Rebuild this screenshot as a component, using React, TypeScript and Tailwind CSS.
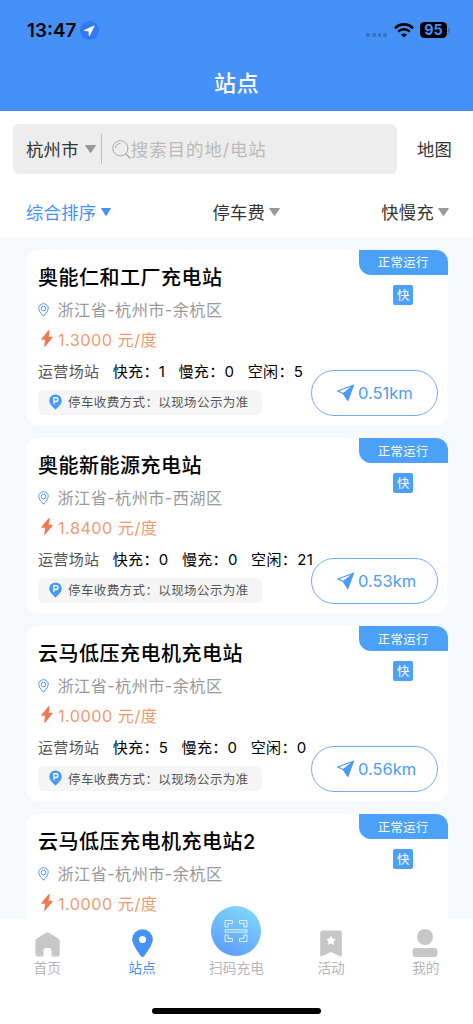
import type { ReactNode } from "react";

const stations = [
    { name: "奥能仁和工厂充电站", address: "浙江省-杭州市-余杭区", price: "1.3000", fast: 1, slow: 0, idle: 5, distance: "0.51km" },
    { name: "奥能新能源充电站", address: "浙江省-杭州市-西湖区", price: "1.8400", fast: 0, slow: 0, idle: 21, distance: "0.53km" },
    { name: "云马低压充电机充电站", address: "浙江省-杭州市-余杭区", price: "1.0000", fast: 5, slow: 0, idle: 0, distance: "0.56km" },
    { name: "云马低压充电机充电站2", address: "浙江省-杭州市-余杭区", price: "1.0000" },
];

type Station = {
    name: string;
    address: string;
    price: string;
    fast?: number;
    slow?: number;
    idle?: number;
    distance?: string;
};

function Caret({ className }: { className: string }) {
    return (
        <svg className={className} viewBox="0 0 10 8" preserveAspectRatio="none" fill="currentColor">
            <path d="M.6 0h8.8q.8 0 .4.7L5.5 7.6q-.5.7-1 0L.2.7Q-.2 0 .6 0Z" />
        </svg>
    );
}

function StatusBar() {
    return (
        <div className="flex h-[60px] items-center pl-[27px] pr-[23px]">
            <span className="pt-[2px] font-['Inter'] text-[18.8px] font-semibold leading-none text-black">13:47</span>
            <svg className="ml-[4px] size-[19px]" viewBox="0 0 19 19">
                <circle cx="9.5" cy="9.5" r="9.5" fill="#3478f6" />
                <path d="M14 4.6 4 9.3q-.6.5.2.7l4.4.2.2 4.6q.3.8.8.1L14.5 5.2q.1-.7-.5-.6Z" fill="#fff" />
            </svg>
            <div className="ml-auto flex items-center">
                <div className="mt-[10px] flex gap-[2px]">
                    {[0, 1, 2, 3].map((i) => (
                        <span key={i} className="size-[3.7px] rounded-[1px] bg-[#3473c5]" />
                    ))}
                </div>
                <svg className="ml-[7px] h-[15px] w-[20px]" viewBox="0 0 20 15" fill="none" stroke="#000">
                    <path d="M1 5.2Q5 1.4 10 1.4T19 5.2" strokeWidth="2.6" />
                    <path d="M4.2 8.7Q6.8 6.3 10 6.3T15.8 8.7" strokeWidth="2.5" />
                    <path d="M10 14.5 6.9 11.6Q8.2 10.4 10 10.4T13.1 11.6Z" fill="#000" stroke="none" />
                </svg>
                <div className="ml-[6px] flex h-[16px] w-[27px] items-center justify-center rounded-[4.5px] bg-black pt-px font-['Inter'] text-[14.3px] font-bold leading-none text-[#4591f8]">
                    95
                </div>
                <span className="ml-[1px] h-[5px] w-[2px] rounded-r bg-[#3473c5]" />
            </div>
        </div>
    );
}

function StationCard({ station }: { station: Station }) {
    return (
        <div className="relative h-[175.5px] w-[422px] shrink-0 rounded-[12px] bg-white pl-[12.5px]">
            <div className="absolute right-0 top-0 flex w-[88.5px] flex-col items-center">
                <div className="flex h-[25px] w-full items-center justify-center rounded-bl-[12px] rounded-tr-[12px] bg-[#4ba0f8] pt-[3px] text-[12.3px] tracking-[0.4px] text-white">
                    正常运行
                </div>
                <div className="mt-[10.5px] flex size-[20px] items-center justify-center rounded-[2px] bg-[#4ba0f8] pt-[2px] text-[12.5px] leading-none text-white">
                    快
                </div>
            </div>

            <div className="flex h-[45px] items-center pt-[12px] text-[20px] font-medium tracking-[0.5px] text-black">
                {station.name}
            </div>
            <div className="flex h-[30px] items-center text-[16.2px] tracking-[0.4px] text-[#999]">
                <svg className="mr-[8.5px] h-[14px] w-[11px]" viewBox="0 0 11 14" fill="none" stroke="#4b96f8">
                    <path d="M5.5 13.2Q.7 8.5.7 5.5a4.8 4.8 0 0 1 9.6 0Q10.3 8.5 5.5 13.2Z" />
                    <circle cx="5.5" cy="5.5" r="2.3" />
                </svg>
                {station.address}
            </div>
            <div className="flex h-[30px] items-center text-[16.2px] tracking-[0.5px] text-[#f09972]">
                <svg className="mb-[2px] ml-[3px] mr-[5px] h-[17px] w-[12px]" viewBox="0 0 12 17" fill="#ee7850">
                    <path d="M7.6.3.2 8.9q-.4.8.5.8h3.5L3.2 16q.1 1.2 1 .4L11.7 7.6q.5-.8-.4-.8H7.7L8.6.8Q8.5-.5 7.6.3Z" />
                </svg>
                {station.price} 元/度
            </div>

            {station.distance && (
                <>
                    <div className="flex h-[33px] items-center gap-[13.3px] whitespace-nowrap pt-[2px] text-[15px] tracking-[0.35px] text-black">
                        <span className="text-[#555]">运营场站</span>
                        <span>快充：{station.fast}</span>
                        <span>慢充：{station.slow}</span>
                        <span>空闲：{station.idle}</span>
                    </div>
                    <div className="mt-[2px] flex h-[25px] w-[224px] items-center rounded-[6px] bg-[#f5f5f5] pl-[10.5px] text-[12.5px] tracking-[0.4px] text-[#555]">
                        <svg className="mr-[6.5px] h-[16px] w-[13px] shrink-0" viewBox="0 0 13 16">
                            <path d="M6.5 15.8 2.2 11.3A6.3 6.3 0 1 1 10.8 11.3Z" fill="#469af0" />
                            <path d="M4.9 10V3.7h2.2a1.9 1.9 0 0 1 0 3.8H4.9" fill="none" stroke="#fff" strokeWidth="1.3" />
                        </svg>
                        <span className="pt-[3px]">停车收费方式：以现场公示为准</span>
                    </div>

                    <button className="absolute bottom-[9.5px] right-[10px] flex h-[46px] w-[126.5px] items-center rounded-full border border-[#6eaafb] pl-[24px] text-[16.5px] text-[#4b9bf8]">
                        <svg className="mr-[3px] h-[18px] w-[19px]" viewBox="0 0 19 18">
                            <path d="M18.5.3.3 6.9l6.3 2.9L12 17.8Z" fill="#4b9bf8" />
                            <path d="M15 2.8 3.3 6.9l4 1.8Z" fill="#fff" />
                        </svg>
                        <span className="pt-px">{station.distance}</span>
                    </button>
                </>
            )}
        </div>
    );
}

function NavItem({ label, active, children }: { label: string; active?: boolean; children: ReactNode }) {
    return (
        <div className={`flex flex-1 flex-col items-center text-[13.7px] leading-[20px] ${active ? "text-[#4591f8]" : "text-[#b5b5b5]"}`}>
            <div className="flex h-[39px] items-end pb-[1px]">{children}</div>
            {label}
        </div>
    );
}

export default function App() {
    return (
        <div className="flex h-[1024px] w-[473px] flex-col overflow-hidden bg-[#f5f9fc] font-['Inter','Noto_Sans_CJK_SC',sans-serif]">
            <header className="h-[111px] shrink-0 bg-[#4591f8]">
                <StatusBar />
                <h1 className="mt-[6px] text-center text-[22px] font-medium leading-[34px] tracking-[0.5px] text-white">站点</h1>
            </header>

            {/* Search */}
            <div className="flex h-[76px] shrink-0 items-center bg-white pl-[13px] text-[17.3px] tracking-[0.3px] text-[#333]">
                <div className="flex h-[50px] w-[384px] items-center rounded-[6px] bg-[#ededed] pl-[13px]">
                    <span className="pt-[2px]">杭州市</span>
                    <Caret className="ml-[6px] h-[8px] w-[11px] text-[#999]" />
                    <span className="ml-[5px] h-[30px] w-px bg-[#bbb]" />
                    <svg className="ml-[10px] size-[19px]" viewBox="0 0 19 19" fill="none" stroke="#aaa">
                        <circle cx="8.3" cy="8.3" r="7.6" />
                        <path d="m13.8 13.8 4.7 4.7" strokeWidth="1.4" />
                        <path d="M3.5 8.3a4.8 4.8 0 0 1 4.8-4.8" />
                    </svg>
                    <span className="pt-[2px] text-[17.5px] tracking-[0.9px] text-[#bababa]">搜索目的地/电站</span>
                </div>
                <span className="ml-[20px] pt-[2px]">地图</span>
            </div>

            {/* Filters */}
            <div className="flex h-[50px] shrink-0 items-center justify-between bg-white pl-[26px] pr-[24px] pt-[2px] text-[17.3px] tracking-[0.3px] text-[#333]">
                <div className="flex items-center text-[#4591f8]">
                    综合排序
                    <Caret className="mb-[2px] ml-[5px] h-[8px] w-[10px]" />
                </div>
                <div className="flex items-center">
                    停车费
                    <Caret className="mb-[2px] ml-[4px] h-[8px] w-[11px] text-[#999]" />
                </div>
                <div className="flex items-center">
                    快慢充
                    <Caret className="mb-[2px] ml-[4px] h-[8px] w-[11px] text-[#999]" />
                </div>
            </div>

            {/* Station list */}
            <main className="flex h-[682px] shrink-0 flex-col gap-[12.6px] overflow-hidden pl-[25.5px] pt-[12.7px]">
                {stations.map((station) => (
                    <StationCard key={station.name} station={station} />
                ))}
            </main>

            <nav className="relative flex h-[105px] shrink-0 bg-white">
                <NavItem label="首页">
                    <svg className="h-[25px] w-[25px]" viewBox="0 0 25 25" fill="#c7c7c7">
                        <path d="M1.2 7 11 .8q1.5-.8 3 0L23.8 7q.9.6.9 1.6V22.5q0 2-2 2H16.5V18q0-2-2-2h-4q-2 0-2 2v6.5H2.4q-2 0-2-2V8.6q0-1 .8-1.6Z" />
                    </svg>
                </NavItem>
                <NavItem label="站点" active>
                    <svg className="ml-px h-[28px] w-[21px]" viewBox="0 0 21 28">
                        <path d="M10.5 28q-1 0-2-1.3Q.2 15.5.2 10.5a10.3 10.3 0 0 1 20.6 0q0 5-8.3 16.2-1 1.3-2 1.3Z" fill="#4591f8" />
                        <circle cx="10.5" cy="10.5" r="3.5" fill="#fff" />
                    </svg>
                </NavItem>
                <NavItem label="扫码充电">
                    <div className="mb-px flex size-[50px] shrink-0 items-center justify-center rounded-full bg-linear-[25deg] from-[#5896fa] to-[#84defa]">
                        <svg className="size-[24px]" viewBox="0 0 24 24" fill="none" stroke="#e0f3ff" strokeLinejoin="round">
                            <path d="M1 8V1.5h7.5v3H4V8ZM23 8V1.5h-7.5v3H20V8ZM1 16v6.5h7.5v-3H4V16ZM23 16v6.5h-7.5v-3H20V16ZM1 10.8h22v2.4H1Z" />
                        </svg>
                    </div>
                </NavItem>
                <NavItem label="活动">
                    <svg className="h-[27px] w-[22px]" viewBox="0 0 22 27">
                        <path d="M3 .4h16q2.8 0 2.8 2.8v22q0 2-1.7 1.1L11 22l-9.1 4.3Q.2 27.2.2 25.2v-22Q.2.4 3 .4Z" fill="#c7c7c7" />
                        <path d="m11 5.5 1.5 3.1 3.4.5-2.5 2.4.6 3.4-3-1.6-3 1.6.6-3.4-2.5-2.4 3.4-.5Z" fill="#fff" />
                    </svg>
                </NavItem>
                <NavItem label="我的">
                    <svg className="mr-px h-[28px] w-[26px]" viewBox="0 0 26 28" fill="#c7c7c7">
                        <circle cx="13" cy="8" r="8" />
                        <rect x=".5" y="19" width="25" height="9" rx="3" />
                    </svg>
                </NavItem>
                <span className="absolute bottom-[10px] left-[152px] h-[6px] w-[169px] rounded-full bg-black" />
            </nav>
        </div>
    );
}
